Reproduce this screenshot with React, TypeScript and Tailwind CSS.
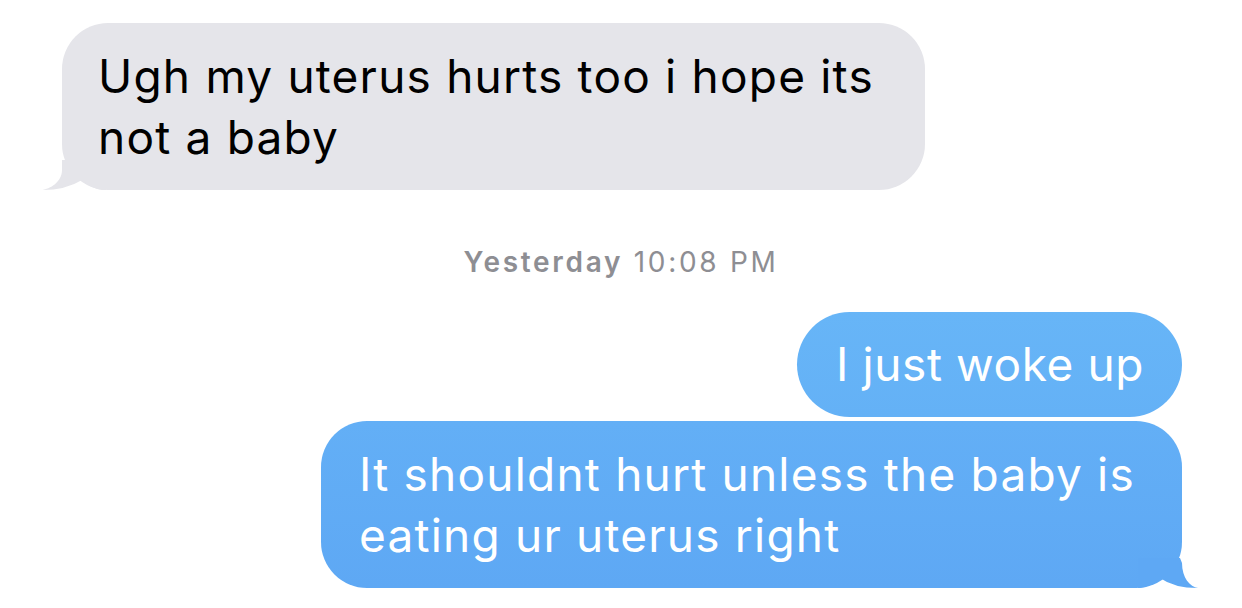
import React from "react";

const font = { fontFamily: "Inter, 'Noto Sans', sans-serif" };

function GrayTail() {
  return (
    <svg
      className="absolute left-[-20px] bottom-0"
      width="64"
      height="30"
      viewBox="0 0 64 30"
    >
      <path
        d="M20,0 L20,10 C20,22 8,29 0,30 Q24,30 40,20 Q48,28 60,30 L64,30 L64,0 Z"
        fill="#e5e5ea"
      />
    </svg>
  );
}

function BlueTail() {
  return (
    <svg
      className="absolute right-[-16px] bottom-0"
      width="60"
      height="30"
      viewBox="0 0 60 30"
    >
      <path
        d="M42,0 L44,5 C44,20 52,29 60,30 Q36,30 22,20 Q14,28 2,30 L0,30 L0,0 Z"
        fill="#5ea8f4"
      />
    </svg>
  );
}

export default function App() {
  return (
    <div
      className="w-[1242px] h-[608px] bg-white overflow-hidden flex flex-col pt-[23px]"
      style={font}
    >
      <div className="relative ml-[62px] w-[863px] rounded-[46px] bg-[#e5e5ea] pl-[36px] pr-[30px] pt-[23px] pb-[22px] text-[46px] leading-[61px] text-black tracking-[1.2px]">
        Ugh my uterus hurts too i hope its not a baby
        <GrayTail />
      </div>

      <div className="mt-[55px] h-[34px] text-center text-[28px] leading-[34px] text-[#8e8e93] tracking-[2.7px]">
        <span className="font-semibold">Yesterday</span> 10:08 PM
      </div>

      <div className="mt-[33px] flex flex-col items-end pr-[60px]">
        <div className="rounded-[53px] bg-gradient-to-b from-[#67b5f7] to-[#64b1f6] pl-[39px] pr-[38px] pt-[22px] pb-[22px] text-[46px] leading-[61px] text-white tracking-[0.6px]">
          I just woke up
        </div>
        <div className="relative mt-[4px] w-[861px] rounded-[46px] bg-gradient-to-b from-[#63aff6] to-[#5ea8f4] pl-[38px] pr-[30px] pt-[23px] pb-[22px] text-[46px] leading-[61px] text-white tracking-[1.2px]">
          It shouldnt hurt unless the baby is eating ur uterus right
          <BlueTail />
        </div>
      </div>
    </div>
  );
}
